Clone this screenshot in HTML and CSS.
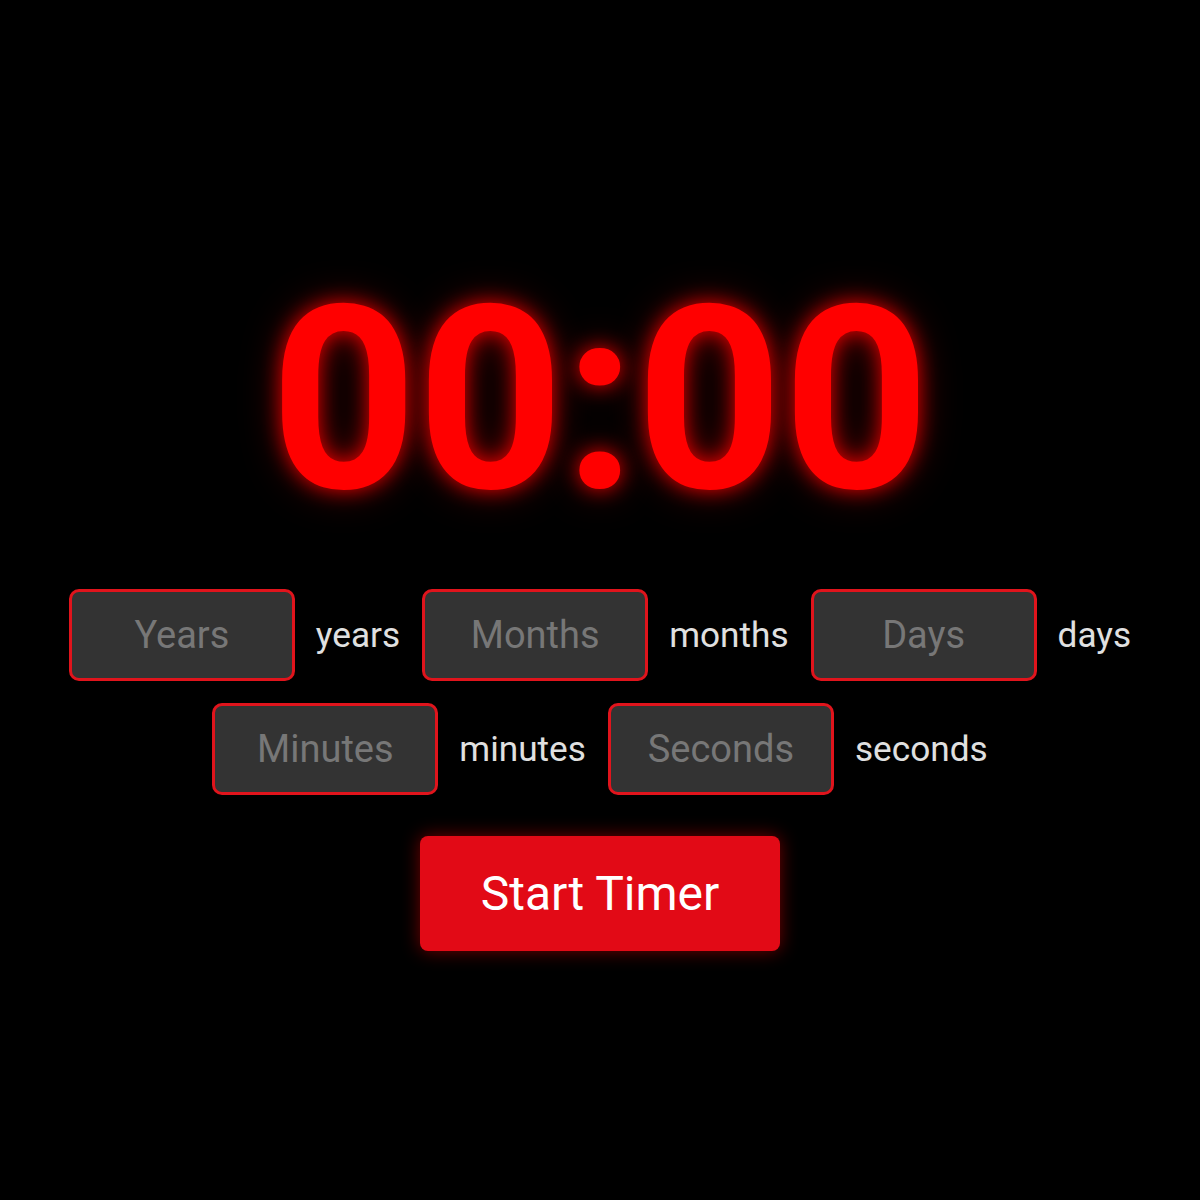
FILE: index.html
```html
<!DOCTYPE html>
<html lang="en">
<head>
<meta charset="utf-8">
<title>Countdown Timer</title>
<link rel="stylesheet" href="styles.css">
</head>
<body>
<main class="app">
  <div class="clock">00:00</div>
  <div class="fields">
    <div class="field"><input class="field-input" type="text" placeholder="Years"><span class="field-label">years</span></div>
    <div class="field"><input class="field-input" type="text" placeholder="Months"><span class="field-label">months</span></div>
    <div class="field"><input class="field-input" type="text" placeholder="Days"><span class="field-label">days</span></div>
    <div class="field"><input class="field-input" type="text" placeholder="Minutes"><span class="field-label">minutes</span></div>
    <div class="field"><input class="field-input" type="text" placeholder="Seconds"><span class="field-label">seconds</span></div>
  </div>
  <button class="start-btn" type="button">Start Timer</button>
</main>
</body>
</html>
```
FILE: styles.css
```css
html, body {
  margin: 0;
  padding: 0;
  background: #000;
}
body {
  font-family: Roboto, "Liberation Sans", sans-serif;
  color: #ddd;
}
.app {
  height: 100vh;
  display: flex;
  flex-direction: column;
  align-items: center;
  justify-content: center;
}
.clock {
  font-size: 256px;
  font-weight: 700;
  line-height: normal;
  color: #ff0000;
  text-shadow: 0 0 20px rgba(255, 0, 0, 0.85), 0 0 40px rgba(255, 0, 0, 0.35);
  margin-bottom: 38px;
}
.fields {
  width: 1100px;
  display: flex;
  flex-wrap: wrap;
  justify-content: center;
  column-gap: 22px;
  row-gap: 22px;
}
.field {
  display: flex;
  align-items: center;
  gap: 21px;
}
.field-input {
  box-sizing: border-box;
  width: 226px;
  height: 92px;
  background: #333;
  border: 3px solid #e0141c;
  border-radius: 10px;
  color: #eee;
  font-family: Roboto, "Liberation Sans", sans-serif;
  font-size: 38px;
  text-align: center;
  outline: none;
  padding: 0 10px;
}
.field-input::placeholder {
  color: #777;
}
.field-label {
  font-size: 35.2px;
  color: #e0e0e0;
}
.start-btn {
  margin-top: 41px;
  width: 360px;
  height: 115px;
  background: #e20a16;
  border: none;
  border-radius: 8px;
  color: #fff;
  font-family: Roboto, "Liberation Sans", sans-serif;
  font-size: 48px;
  box-shadow: 0 0 18px rgba(255, 0, 0, 0.45);
  cursor: pointer;
}
```
